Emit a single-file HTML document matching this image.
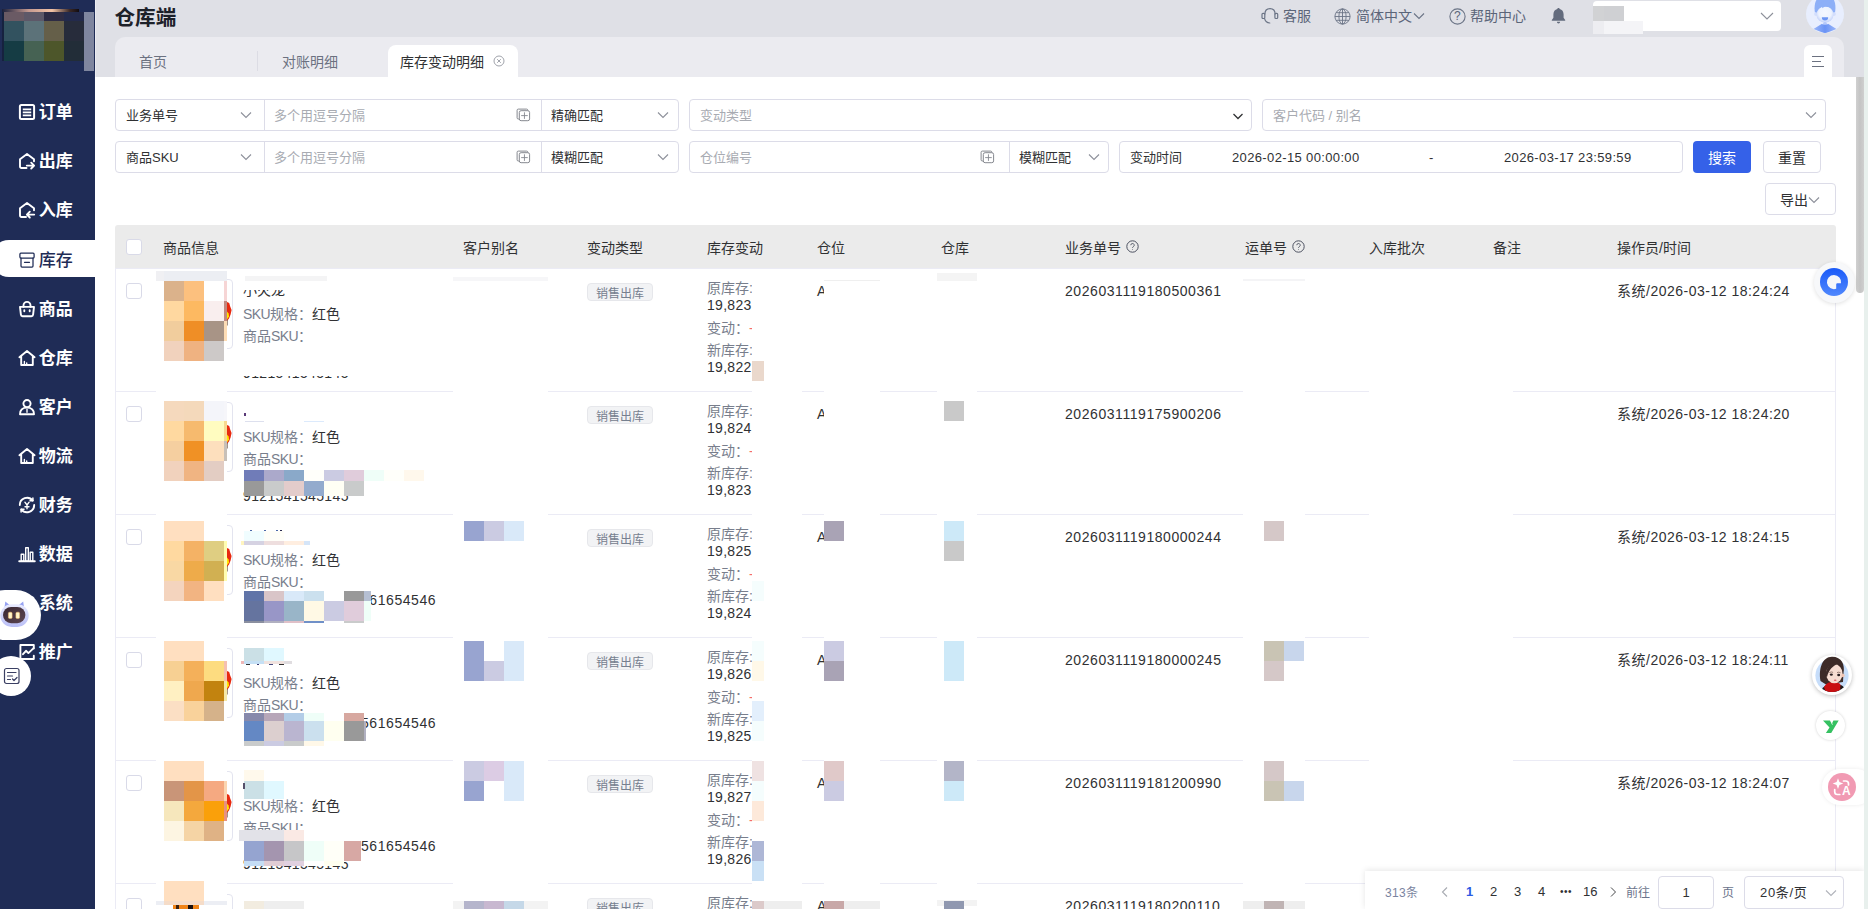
<!DOCTYPE html><html lang="zh-CN"><head><meta charset="utf-8"><title>仓库端 - 库存变动明细</title><style>
*{box-sizing:border-box;margin:0;padding:0}
html,body{width:1868px;height:909px;overflow:hidden;background:#fff}
body{position:relative;font-family:"Liberation Sans","Noto Sans CJK SC",sans-serif;font-size:14px;color:#303133}
.a{position:absolute}
.t{position:absolute;white-space:nowrap;line-height:20px}
#side{left:0;top:0;width:95px;height:909px;background:#1f2c56}
#hdr{left:95px;top:0;width:1769px;height:77px;background:#dfe0e6}
#rstrip{left:1864px;top:0;width:4px;height:909px;background:#e8f0ed}
#tabs{left:115px;top:37px;width:1729px;height:40px;background:#ebebf0;border-radius:10px 10px 0 0}
.mi{position:absolute;left:0;width:95px;height:36px;color:#fff;font-weight:700;font-size:17px}
.mi span{position:absolute;left:38.800px;top:2.200px;line-height:36px;white-space:nowrap}
.mi svg{position:absolute;left:16.600px;top:9px;width:20px;height:20px;fill:none;stroke:#fff;stroke-width:1.9;stroke-linecap:round;stroke-linejoin:round}
.mi.act{background:#fff;border-radius:18px 0 0 18px;color:#1f2c56;margin-top:-1px;height:37px;left:-9px;width:104px;font-weight:500}
.mi.act span{left:47.800px}
.mi.act svg{left:25.600px}
.mi.act span{top:3px}
.mi.act svg{top:10px;stroke-width:1.250}
.mi.act svg{stroke:#1f2c56}
.ht{color:#5b6579;font-size:14px}
.box{position:absolute;border:1px solid #dcdce8;border-radius:4px;background:#fff}
.ft{position:absolute;white-space:nowrap;font-size:13px;line-height:32px;color:#303133;top:0}
.ph{color:#a8abb2}
.dv{position:absolute;top:0;width:1px;height:30px;background:#dcdce8}
.arr{position:absolute;width:12px;height:12px;fill:none;stroke:#8d909a;stroke-width:1.1}
.th{position:absolute;top:238px;line-height:20px;font-size:14px;color:#303133;white-space:nowrap}
.cb{position:absolute;width:16px;height:16px;border:1px solid #d9dae8;border-radius:3px;background:#fff}
.tag{position:absolute;left:587px;width:66px;height:18px;border:1px solid #e6e7eb;border-radius:4px;background:#f2f3f5;color:#76808f;font-size:12px;line-height:21px;text-align:center;white-space:nowrap}
.lb{color:#787e8c}
.rl{position:absolute;height:1px;background:#ebebf5}
.m{position:absolute}
.num{letter-spacing:.56px}
.n2{letter-spacing:.3px;position:relative;top:-1px}
.sk{letter-spacing:-.6px}
</style></head><body>
<div class="a" id="hdr"></div>
<div class="a" id="tabs"></div>
<div class="a" id="rstrip"></div>
<div class="t" style="left:114.500px;top:6px;font-size:20.600px;font-weight:700;line-height:24px;color:#1d2129">仓库端</div>
<div class="t" style="left:139px;top:51.500px;color:#6b7180">首页</div>
<div class="a" style="left:257px;top:51px;width:1px;height:20px;background:#dcdce4"></div>
<div class="t" style="left:282px;top:51.500px;color:#6b7180">对账明细</div>
<div class="a" style="left:388px;top:45px;width:130px;height:32px;background:#fff;border-radius:8px 8px 0 0"></div>
<div class="t" style="left:400px;top:51.500px;color:#303133">库存变动明细</div>
<svg class="a" style="left:493px;top:55px" width="12" height="12" viewBox="0 0 12 12" fill="none" stroke="#a0a3ab" stroke-width="1"><circle cx="6" cy="6" r="5"/><path d="M4.2 4.2l3.6 3.6M7.8 4.2L4.2 7.8"/></svg>
<div class="a" style="left:1804px;top:45px;width:28px;height:32px;background:#fff;border-radius:6px 6px 0 0"></div>
<svg class="a" style="left:1811px;top:55px" width="14" height="13" viewBox="0 0 14 13" fill="none" stroke="#6b7180" stroke-width="1.2"><path d="M1 1.5h12M1 6.5h9M1 11.5h12"/></svg>
<svg class="a" style="left:1261px;top:7px" width="18" height="18" viewBox="0 0 18 18" fill="none" stroke="#6b7486" stroke-width="1.200" stroke-linecap="round"><rect x="1" y="6.300" width="2.800" height="5.200" rx="1"/><rect x="13.900" y="6.300" width="2.800" height="5.200" rx="1"/><path d="M3.900 7C3.900 3.500 6 1.600 9 1.600S14.100 3.500 14.100 7M3.600 11.600C4.200 14 6 15.800 8.800 16"/></svg>
<div class="t ht" style="left:1283px;top:6px">客服</div>
<svg class="a" style="left:1334px;top:8px" width="17" height="17" viewBox="0 0 17 17" fill="none" stroke="#6b7486" stroke-width="0.9"><circle cx="8.5" cy="8.5" r="7.6"/><ellipse cx="8.5" cy="8.5" rx="3.6" ry="7.6"/><path d="M8.5 .9v15.2M.9 8.5h15.2M2 4.7h13M2 12.3h13"/></svg>
<div class="t ht" style="left:1356px;top:6px">简体中文</div>
<svg class="a" style="left:1413px;top:11px" width="12" height="10" viewBox="0 0 12 10" fill="none" stroke="#6b7486" stroke-width="1.1"><path d="M1 2.5l5 5 5-5"/></svg>
<svg class="a" style="left:1449px;top:8px" width="17" height="17" viewBox="0 0 17 17" fill="none" stroke="#6b7486" stroke-width="1.1"><circle cx="8.5" cy="8.5" r="7.6"/></svg>
<div class="t ht" style="left:1454px;top:6px;font-size:12px">?</div>
<div class="t ht" style="left:1470px;top:6px">帮助中心</div>
<svg class="a" style="left:1550px;top:7px" width="17" height="18" viewBox="0 0 17 18"><path fill="#636b7d" d="M8.5 1c.7 0 1.2.5 1.2 1.1 2.4.6 3.9 2.600 3.900 5.200v3.500l1.600 2.200v.8H1.800v-.8l1.600-2.200V7.300c0-2.600 1.500-4.600 3.900-5.200C7.300 1.500 7.800 1 8.500 1zM6.900 14.800h3.200a1.600 1.600 0 0 1-3.200 0z"/></svg>
<div class="a" style="left:1593px;top:1px;width:188px;height:30px;background:#fff;border-radius:4px"></div>
<div class="a" style="left:1593px;top:6px;width:31px;height:15px;background:#cfd0d3"></div>
<div class="a" style="left:1593px;top:6px;width:11px;height:15px;background:#d1d2d4"></div>
<div class="a" style="left:1593px;top:21px;width:50px;height:13px;background:#f4f4f7"></div>
<div class="a" style="left:1593px;top:21px;width:11px;height:13px;background:#ededf1"></div>
<svg class="a" style="left:1760px;top:11px" width="14" height="10" viewBox="0 0 14 10" fill="none" stroke="#8d909a" stroke-width="1.1"><path d="M1 2l6 6 6-6"/></svg>
<svg class="a" style="left:1806px;top:-5px" width="38" height="38" viewBox="0 0 38 38"><defs><clipPath id="avc"><circle cx="19" cy="19" r="19"/></clipPath><radialGradient id="avf" cx=".5" cy=".4" r=".6"><stop offset="0" stop-color="#f4f7ff"/><stop offset=".6" stop-color="#eef3fe"/><stop offset="1" stop-color="#bfcffa"/></radialGradient><linearGradient id="avg" x1="0" y1="0" x2="1" y2="0"><stop offset="0" stop-color="#9bb6f9"/><stop offset=".5" stop-color="#6a93f5"/><stop offset="1" stop-color="#9bb6f9"/></linearGradient></defs><circle cx="19" cy="19" r="19" fill="#e8eefe"/><g clip-path="url(#avc)"><path d="M9.300 19C7 10 10 0 19-1c9 0 12 10 9.700 20z" fill="#8daff7"/><circle cx="10.100" cy="19" r="2" fill="#d3defc"/><circle cx="27.900" cy="19" r="2" fill="#d3defc"/><ellipse cx="19" cy="19.500" rx="8.600" ry="8.300" fill="url(#avf)"/><path d="M10.200 18.500C9.500 10 14 6.500 19 6.500c5.500 0 9.500 3.500 8.800 12-.5-4-2.500-6.800-7.800-6.800-1.600 0-3 .6-4 1.500l.3-1.500c-3 1-5.300 3-6.100 6.800z" fill="#8daff7"/><path d="M15.800 22.300h6.400a3.200 3.200 0 0 1-6.400 0z" fill="#6e96f3"/><rect x="17.100" y="27" width="3.800" height="4.500" rx="1.600" fill="#b5c8fa"/><path d="M7.500 34L16 28.700c1 1.500 5 1.500 6 0L30.500 34 19 38.500z" fill="url(#avg)"/></g></svg>
<div class="a" id="side"></div>
<div class="a" style="left:95px;top:0;width:1px;height:77px;background:#ececf1"></div>
<div class="m" style="left:2px;top:9px;width:77px;height:4px;background:linear-gradient(90deg,#1a1f3a 0%,#c59a90 35%,#f3c3a6 65%,#3a2826 88%,#120c10 100%)"></div>
<div class="m" style="left:2px;top:12px;width:3px;height:49px;background:#16223f"></div>
<div class="m" style="left:4px;top:12px;width:20px;height:9px;background:#6a5a64"></div>
<div class="m" style="left:24px;top:12px;width:20px;height:9px;background:#5d5868"></div>
<div class="m" style="left:44px;top:12px;width:20px;height:9px;background:#2e2c44"></div>
<div class="m" style="left:64px;top:12px;width:20px;height:9px;background:#232a4c"></div>
<div class="m" style="left:4px;top:21px;width:20px;height:20px;background:#32525f"></div>
<div class="m" style="left:24px;top:21px;width:20px;height:20px;background:#5c7279"></div>
<div class="m" style="left:44px;top:21px;width:20px;height:20px;background:#655f49"></div>
<div class="m" style="left:64px;top:21px;width:20px;height:20px;background:#272c3b"></div>
<div class="m" style="left:4px;top:41px;width:20px;height:20px;background:#153c44"></div>
<div class="m" style="left:24px;top:41px;width:20px;height:20px;background:#466253"></div>
<div class="m" style="left:44px;top:41px;width:20px;height:20px;background:#4d562a"></div>
<div class="m" style="left:64px;top:41px;width:20px;height:20px;background:#222d38"></div>
<div class="a" style="left:84px;top:12px;width:10px;height:59px;background:#7f869f"></div>
<div class="mi" style="top:93px"><svg viewBox="0 0 20 20"><rect x="2.900" y="3" width="14.200" height="14" rx="1.500" stroke-width="2"/><path d="M5.800 7.300h8.400M5.800 10.300h8.400M5.800 13.300h8.400" stroke-width="1.700" stroke-linecap="butt"/></svg><span>订单</span></div>
<div class="mi" style="top:142px"><svg viewBox="0 0 20 20"><path d="M9.500 17H4.400A1.400 1.400 0 0 1 3 15.600V8.200L10 2.900l7 5.300v2"/><path d="M9.800 14.600h7.200M14.200 11.700l2.900 2.900-2.900 2.900"/></svg><span>出库</span></div>
<div class="mi" style="top:191px"><svg viewBox="0 0 20 20"><path d="M9 17H4.400A1.400 1.400 0 0 1 3 15.600V8.200L10 2.900l7 5.300v2"/><path d="M17.200 14.600H10M12.800 11.700l-2.900 2.900 2.900 2.900"/></svg><span>入库</span></div>
<div class="mi act" style="top:241px"><svg viewBox="0 0 20 20"><rect x="2.900" y="3.200" width="14.200" height="4.800" rx="1"/><path d="M4 8v8a1 1 0 0 0 1 1h10a1 1 0 0 0 1-1V8M7.500 12.300h5"/></svg><span>库存</span></div>
<div class="mi" style="top:290px"><svg viewBox="0 0 20 20"><path d="M3 7.900h14l-.9 7.800a1.700 1.700 0 0 1-1.700 1.500H5.600a1.700 1.700 0 0 1-1.700-1.500z"/><path d="M6.500 7.900V6.400a3.500 3.500 0 0 1 7 0v1.500M7.300 11.300v1M12.700 11.300v1"/></svg><span>商品</span></div>
<div class="mi" style="top:339px"><svg viewBox="0 0 20 20"><path d="M2.400 9.200L10 2.900l7.600 6.300M4.200 8.200V17h11.600V8.200"/><path d="M7.400 16.500v-3M9.700 16.500V15" stroke-width="1.400"/></svg><span>仓库</span></div>
<div class="mi" style="top:388px"><svg viewBox="0 0 20 20"><circle cx="10" cy="6.600" r="3.600"/><path d="M3 17.200c0-4.500 3-6.600 7-6.600s7 2.100 7 6.600z"/><path d="M10 12.500v2.800" stroke-width="1.400"/></svg><span>客户</span></div>
<div class="mi" style="top:437px"><svg viewBox="0 0 20 20"><path d="M2.400 9.200L10 2.900l7.600 6.300M4.200 8.200V17h11.600V8.200"/><path d="M7.400 16.500v-3M9.700 16.500V15" stroke-width="1.400"/></svg><span>物流</span></div>
<div class="mi" style="top:486px"><svg viewBox="0 0 20 20"><path d="M17.200 10A7.200 7.200 0 0 1 4.300 14.400M2.800 10A7.200 7.200 0 0 1 15.700 5.600"/><path d="M15.900 2.900v2.900h-2.900M4.100 17.100v-2.900h2.900" stroke-width="1.500"/><path d="M7.900 7.200L10 10l2.100-2.800M10 10v3.800M8 11.700h4" stroke-width="1.400"/></svg><span>财务</span></div>
<div class="mi" style="top:535px"><svg viewBox="0 0 20 20"><path d="M2.200 17.300h15.600"/><rect x="4.200" y="10.300" width="2.600" height="7" stroke-width="1.400"/><rect x="8.700" y="3.800" width="2.600" height="13.500" stroke-width="1.400"/><rect x="13.200" y="8.300" width="2.600" height="9" stroke-width="1.400"/></svg><span>数据</span></div>
<div class="mi" style="top:584px"><svg viewBox="0 0 20 20"><circle cx="10" cy="10" r="2.800"/><path d="M10 2v2.300M10 15.700V18M2 10h2.300M15.700 10H18M4.300 4.300l1.700 1.700M14 14l1.700 1.700M4.300 15.700L6 14M14 6l1.700-1.700"/></svg><span>系统</span></div>
<div class="mi" style="top:633px"><svg viewBox="0 0 20 20"><path d="M16.800 6.500V3H3.400v14h13.400v-3.200"/><path d="M6 12.200l3-3.400 2.400 2.300 5.200-5"/></svg><span>推广</span></div>
<div class="a" style="left:-20px;top:590px;width:61px;height:50px;background:#fff;border-radius:25px"></div>
<svg class="a" style="left:0;top:600px" width="30" height="30" viewBox="0 0 30 30"><defs><linearGradient id="rb" x1="0" y1="0" x2="0" y2="1"><stop offset="0" stop-color="#e9ebfe"/><stop offset="1" stop-color="#b9bef6"/></linearGradient><linearGradient id="rf" x1="0" y1="0" x2="1" y2="1"><stop offset="0" stop-color="#3a2832"/><stop offset="1" stop-color="#5c4552"/></linearGradient></defs><path d="M4.300 9L5.300 1.600 10.500 5.800zM24.200 9L23.200 1.600 18 5.800z" fill="#96a2f2"/><rect x=".3" y="4.300" width="28.400" height="22.600" rx="11.300" fill="url(#rb)"/><rect x="3" y="7" width="22.400" height="16.200" rx="8.100" fill="url(#rf)"/><rect x="8.400" y="12.200" width="3.700" height="6.300" rx="1.200" fill="#fff4c8" stroke="#f2b86a" stroke-width=".5"/><rect x="15.900" y="12.200" width="3.700" height="6.300" rx="1.200" fill="#fff4c8" stroke="#f2b86a" stroke-width=".5"/></svg>
<div class="a" style="left:-9px;top:656px;width:40px;height:40px;background:#fff;border-radius:20px"></div>
<svg class="a" style="left:3px;top:667px" width="18" height="18" viewBox="0 0 18 18" fill="none" stroke="#3a3f63" stroke-width="1.200" stroke-linecap="round" stroke-linejoin="round"><rect x="1.500" y="1.500" width="14.500" height="15" rx="2"/><path d="M4.500 5.500h8.500M4.500 9h5M4.500 12.500h3M9.500 12l1.500 1.500 3-3"/></svg>
<div class="box" style="left:115px;top:99px;width:564px;height:32px">
<div class="dv" style="left:148px"></div><div class="dv" style="left:425px"></div>
<div class="ft" style="left:10px">业务单号</div>
<svg class="arr" style="left:124px;top:9px" viewBox="0 0 12 12"><path d="M1 3.500l5 5 5-5"/></svg>
<div class="ft ph" style="left:158px">多个用逗号分隔</div>
<svg class="a" style="left:400px;top:8px" width="15" height="14" viewBox="0 0 15 14" fill="none" stroke="#85888f" stroke-width="1"><path d="M3.200 11H2.300a1.200 1.200 0 0 1-1.200-1.200V2.300a1.200 1.200 0 0 1 1.200-1.200h8.300a1.200 1.200 0 0 1 1.200 1.200v.3"/><rect x="3.300" y="2.700" width="10.300" height="10" rx="1.800"/><path d="M8.450 4.300v6.600M5.150 7.600h6.600" stroke-width=".9"/></svg>
<div class="ft" style="left:435px">精确匹配</div>
<svg class="arr" style="left:541px;top:9px" viewBox="0 0 12 12"><path d="M1 3.500l5 5 5-5"/></svg>
</div>
<div class="box" style="left:115px;top:141px;width:564px;height:32px">
<div class="dv" style="left:148px"></div><div class="dv" style="left:425px"></div>
<div class="ft" style="left:10px">商品SKU</div>
<svg class="arr" style="left:124px;top:9px" viewBox="0 0 12 12"><path d="M1 3.500l5 5 5-5"/></svg>
<div class="ft ph" style="left:158px">多个用逗号分隔</div>
<svg class="a" style="left:400px;top:8px" width="15" height="14" viewBox="0 0 15 14" fill="none" stroke="#85888f" stroke-width="1"><path d="M3.200 11H2.300a1.200 1.200 0 0 1-1.200-1.200V2.300a1.200 1.200 0 0 1 1.200-1.200h8.300a1.200 1.200 0 0 1 1.200 1.200v.3"/><rect x="3.300" y="2.700" width="10.300" height="10" rx="1.800"/><path d="M8.450 4.300v6.600M5.150 7.600h6.600" stroke-width=".9"/></svg>
<div class="ft" style="left:435px">模糊匹配</div>
<svg class="arr" style="left:541px;top:9px" viewBox="0 0 12 12"><path d="M1 3.500l5 5 5-5"/></svg>
</div>
<div class="box" style="left:689px;top:99px;width:563px;height:32px"><div class="ft ph" style="left:10px">变动类型</div><svg class="arr" style="left:542px;top:10px;stroke:#303133;stroke-width:1.250" viewBox="0 0 12 12"><path d="M1.500 4l4.500 4.500L10.500 4"/></svg></div>
<div class="box" style="left:1262px;top:99px;width:564px;height:32px"><div class="ft ph" style="left:10px">客户代码 / 别名</div><svg class="arr" style="left:542px;top:9px" viewBox="0 0 12 12"><path d="M1 3.500l5 5 5-5"/></svg></div>
<div class="box" style="left:689px;top:141px;width:420px;height:32px"><div class="dv" style="left:319px"></div><div class="ft ph" style="left:10px">仓位编号</div><svg class="a" style="left:290px;top:8px" width="15" height="14" viewBox="0 0 15 14" fill="none" stroke="#85888f" stroke-width="1"><path d="M3.200 11H2.300a1.200 1.200 0 0 1-1.200-1.200V2.300a1.200 1.200 0 0 1 1.200-1.200h8.300a1.200 1.200 0 0 1 1.200 1.200v.3"/><rect x="3.300" y="2.700" width="10.300" height="10" rx="1.800"/><path d="M8.450 4.300v6.600M5.150 7.600h6.600" stroke-width=".9"/></svg><div class="ft" style="left:329px">模糊匹配</div><svg class="arr" style="left:398px;top:9px" viewBox="0 0 12 12"><path d="M1 3.500l5 5 5-5"/></svg></div>
<div class="box" style="left:1119px;top:141px;width:564px;height:32px"><div class="ft" style="left:10px">变动时间</div><div class="ft" style="left:112px;letter-spacing:.36px">2026-02-15 00:00:00</div><div class="ft" style="left:309px">-</div><div class="ft" style="left:384px;letter-spacing:.36px">2026-03-17 23:59:59</div></div>
<div class="a" style="left:1693px;top:141px;width:58px;height:32px;background:#3561e8;border-radius:4px;color:#fff;font-size:14px;line-height:34px;text-align:center">搜索</div>
<div class="box" style="left:1763px;top:141px;width:58px;height:32px;font-size:14px;line-height:32px;text-align:center;color:#303133">重置</div>
<div class="box" style="left:1765px;top:183px;width:71px;height:32px"><div class="ft" style="left:14px;font-size:14px;top:-.3px">导出</div><svg class="arr" style="left:42px;top:10px" viewBox="0 0 12 12"><path d="M1 3.500l5 5 5-5"/></svg></div>
<div class="a" style="left:115px;top:225px;width:1721px;height:43px;background:#ebebeb;border-radius:3px 3px 0 0"></div>
<div class="rl" style="left:115px;top:268px;width:1721px"></div>
<div class="a" style="left:115px;top:268px;width:1px;height:641px;background:#ebebf5"></div>
<div class="a" style="left:1835px;top:268px;width:1px;height:641px;background:#ebebf5"></div>
<div class="cb" style="left:126px;top:239px"></div>
<div class="th" style="left:163px">商品信息</div>
<div class="th" style="left:463px">客户别名</div>
<div class="th" style="left:587px">变动类型</div>
<div class="th" style="left:707px">库存变动</div>
<div class="th" style="left:817px">仓位</div>
<div class="th" style="left:941px">仓库</div>
<div class="th" style="left:1065px">业务单号</div>
<div class="th" style="left:1245px">运单号</div>
<div class="th" style="left:1369px">入库批次</div>
<div class="th" style="left:1493px">备注</div>
<div class="th" style="left:1617px">操作员/时间</div>
<svg class="a" style="left:1126px;top:240px" width="13" height="13" viewBox="0 0 13 13" fill="none" stroke="#4c5160" stroke-width="1"><circle cx="6.500" cy="6.500" r="5.700"/><path d="M4.800 5.200a1.700 1.700 0 1 1 2.500 1.500c-.5.300-.8.600-.8 1.200M6.500 9.300v.6" stroke-width=".9"/></svg>
<svg class="a" style="left:1292px;top:240px" width="13" height="13" viewBox="0 0 13 13" fill="none" stroke="#4c5160" stroke-width="1"><circle cx="6.500" cy="6.500" r="5.700"/><path d="M4.800 5.200a1.700 1.700 0 1 1 2.500 1.500c-.5.300-.8.600-.8 1.200M6.500 9.300v.6" stroke-width=".9"/></svg>
<div class="rl" style="left:115px;top:391px;width:1721px"></div>
<div class="cb" style="left:126px;top:283px"></div>
<div class="a" style="left:170px;top:279px;width:63px;height:70px;border:1px solid #e3e4ef;border-radius:4px"></div>
<svg class="a" style="left:227px;top:302px" width="5" height="24" viewBox="0 0 5 24"><path d="M0 0l2.200 1 1 3.500L4.600 8l-1 4.500L2 16.500 0 19z" fill="#e8290f"/><path d="M0 9.500l1.600 2 .4 3L0 17.500z" fill="#ffe600"/><path d="M.4 18v5.500" stroke="#6a5040" stroke-width=".7"/></svg>
<div class="t" style="left:243px;top:304px"><span class="lb"><span class="sk">SKU</span>规格：</span>红色</div>
<div class="t" style="left:243px;top:326px"><span class="lb">商品<span class="sk">SKU</span>：</span></div>
<div class="t" style="left:243px;top:280px;color:#303133">小火龙</div>
<div class="t" style="left:243px;letter-spacing:.35px;top:363px">9121541545145</div>
<div class="tag" style="top:283px">销售出库</div>
<div class="t" style="left:707px;top:279px;line-height:18px"><span class="lb">原库存:</span><br><span class="n2">19,823</span></div>
<div class="t" style="left:707px;top:319px;line-height:18px"><span class="lb">变动：</span><span style="color:#f56c6c">-</span></div>
<div class="t" style="left:707px;top:341px;line-height:18px"><span class="lb">新库存:</span><br><span class="n2">19,822</span></div>
<div class="t" style="left:817px;top:281px">A</div>
<div class="t num" style="left:1065px;top:281px">2026031119180500361</div>
<div class="t" style="left:1617px;top:281px;letter-spacing:.5px">系统/2026-03-12 18:24:24</div>
<div class="rl" style="left:115px;top:514px;width:1721px"></div>
<div class="cb" style="left:126px;top:406px"></div>
<div class="a" style="left:170px;top:402px;width:63px;height:70px;border:1px solid #e3e4ef;border-radius:4px"></div>
<svg class="a" style="left:227px;top:425px" width="5" height="24" viewBox="0 0 5 24"><path d="M0 0l2.200 1 1 3.500L4.600 8l-1 4.500L2 16.500 0 19z" fill="#e8290f"/><path d="M0 9.500l1.600 2 .4 3L0 17.500z" fill="#ffe600"/><path d="M.4 18v5.500" stroke="#6a5040" stroke-width=".7"/></svg>
<div class="t" style="left:243px;top:427px"><span class="lb"><span class="sk">SKU</span>规格：</span>红色</div>
<div class="t" style="left:243px;top:449px"><span class="lb">商品<span class="sk">SKU</span>：</span></div>
<div class="t" style="left:243px;letter-spacing:.35px;top:486px">9121541545145</div>
<div class="tag" style="top:406px">销售出库</div>
<div class="t" style="left:707px;top:402px;line-height:18px"><span class="lb">原库存:</span><br><span class="n2">19,824</span></div>
<div class="t" style="left:707px;top:442px;line-height:18px"><span class="lb">变动：</span><span style="color:#f56c6c">-</span></div>
<div class="t" style="left:707px;top:464px;line-height:18px"><span class="lb">新库存:</span><br><span class="n2">19,823</span></div>
<div class="t" style="left:817px;top:404px">A</div>
<div class="t num" style="left:1065px;top:404px">2026031119175900206</div>
<div class="t" style="left:1617px;top:404px;letter-spacing:.5px">系统/2026-03-12 18:24:20</div>
<div class="rl" style="left:115px;top:637px;width:1721px"></div>
<div class="cb" style="left:126px;top:529px"></div>
<div class="a" style="left:170px;top:525px;width:63px;height:70px;border:1px solid #e3e4ef;border-radius:4px"></div>
<svg class="a" style="left:227px;top:548px" width="5" height="24" viewBox="0 0 5 24"><path d="M0 0l2.200 1 1 3.500L4.600 8l-1 4.500L2 16.500 0 19z" fill="#e8290f"/><path d="M0 9.500l1.600 2 .4 3L0 17.500z" fill="#ffe600"/><path d="M.4 18v5.500" stroke="#6a5040" stroke-width=".7"/></svg>
<div class="t" style="left:243px;top:550px"><span class="lb"><span class="sk">SKU</span>规格：</span>红色</div>
<div class="t" style="left:243px;top:572px"><span class="lb">商品<span class="sk">SKU</span>：</span></div>
<div class="t num" style="left:361px;top:590px">561654546</div>
<div class="tag" style="top:529px">销售出库</div>
<div class="t" style="left:707px;top:525px;line-height:18px"><span class="lb">原库存:</span><br><span class="n2">19,825</span></div>
<div class="t" style="left:707px;top:565px;line-height:18px"><span class="lb">变动：</span><span style="color:#f56c6c">-</span></div>
<div class="t" style="left:707px;top:587px;line-height:18px"><span class="lb">新库存:</span><br><span class="n2">19,824</span></div>
<div class="t" style="left:817px;top:527px">A</div>
<div class="t num" style="left:1065px;top:527px">2026031119180000244</div>
<div class="t" style="left:1617px;top:527px;letter-spacing:.5px">系统/2026-03-12 18:24:15</div>
<div class="rl" style="left:115px;top:760px;width:1721px"></div>
<div class="cb" style="left:126px;top:652px"></div>
<div class="a" style="left:170px;top:648px;width:63px;height:70px;border:1px solid #e3e4ef;border-radius:4px"></div>
<svg class="a" style="left:227px;top:671px" width="5" height="24" viewBox="0 0 5 24"><path d="M0 0l2.200 1 1 3.500L4.600 8l-1 4.500L2 16.500 0 19z" fill="#e8290f"/><path d="M0 9.500l1.600 2 .4 3L0 17.500z" fill="#ffe600"/><path d="M.4 18v5.500" stroke="#6a5040" stroke-width=".7"/></svg>
<div class="t" style="left:243px;top:673px"><span class="lb"><span class="sk">SKU</span>规格：</span>红色</div>
<div class="t" style="left:243px;top:695px"><span class="lb">商品<span class="sk">SKU</span>：</span></div>
<div class="t num" style="left:361px;top:713px">561654546</div>
<div class="tag" style="top:652px">销售出库</div>
<div class="t" style="left:707px;top:648px;line-height:18px"><span class="lb">原库存:</span><br><span class="n2">19,826</span></div>
<div class="t" style="left:707px;top:688px;line-height:18px"><span class="lb">变动：</span><span style="color:#f56c6c">-</span></div>
<div class="t" style="left:707px;top:710px;line-height:18px"><span class="lb">新库存:</span><br><span class="n2">19,825</span></div>
<div class="t" style="left:817px;top:650px">A</div>
<div class="t num" style="left:1065px;top:650px">2026031119180000245</div>
<div class="t" style="left:1617px;top:650px;letter-spacing:.5px">系统/2026-03-12 18:24:11</div>
<div class="rl" style="left:115px;top:883px;width:1721px"></div>
<div class="cb" style="left:126px;top:775px"></div>
<div class="a" style="left:170px;top:771px;width:63px;height:70px;border:1px solid #e3e4ef;border-radius:4px"></div>
<svg class="a" style="left:227px;top:794px" width="5" height="24" viewBox="0 0 5 24"><path d="M0 0l2.200 1 1 3.500L4.600 8l-1 4.500L2 16.500 0 19z" fill="#e8290f"/><path d="M0 9.500l1.600 2 .4 3L0 17.500z" fill="#ffe600"/><path d="M.4 18v5.500" stroke="#6a5040" stroke-width=".7"/></svg>
<div class="t" style="left:243px;top:796px"><span class="lb"><span class="sk">SKU</span>规格：</span>红色</div>
<div class="t" style="left:243px;top:818px"><span class="lb">商品<span class="sk">SKU</span>：</span></div>
<div class="t num" style="left:361px;top:836px">561654546</div>
<div class="t" style="left:243px;letter-spacing:.35px;top:854px">9121541545145</div>
<div class="tag" style="top:775px">销售出库</div>
<div class="t" style="left:707px;top:771px;line-height:18px"><span class="lb">原库存:</span><br><span class="n2">19,827</span></div>
<div class="t" style="left:707px;top:811px;line-height:18px"><span class="lb">变动：</span><span style="color:#f56c6c">-</span></div>
<div class="t" style="left:707px;top:833px;line-height:18px"><span class="lb">新库存:</span><br><span class="n2">19,826</span></div>
<div class="t" style="left:817px;top:773px">A</div>
<div class="t num" style="left:1065px;top:773px">2026031119181200990</div>
<div class="t" style="left:1617px;top:773px;letter-spacing:.5px">系统/2026-03-12 18:24:07</div>
<div class="rl" style="left:115px;top:1006px;width:1721px"></div>
<div class="cb" style="left:126px;top:898px"></div>
<div class="a" style="left:170px;top:894px;width:63px;height:70px;border:1px solid #e3e4ef;border-radius:4px"></div>
<svg class="a" style="left:227px;top:917px" width="5" height="24" viewBox="0 0 5 24"><path d="M0 0l2.200 1 1 3.500L4.600 8l-1 4.500L2 16.500 0 19z" fill="#e8290f"/><path d="M0 9.500l1.600 2 .4 3L0 17.500z" fill="#ffe600"/><path d="M.4 18v5.500" stroke="#6a5040" stroke-width=".7"/></svg>
<div class="t" style="left:243px;top:919px"><span class="lb"><span class="sk">SKU</span>规格：</span>红色</div>
<div class="t" style="left:243px;top:941px"><span class="lb">商品<span class="sk">SKU</span>：</span></div>
<div class="tag" style="top:898px">销售出库</div>
<div class="t" style="left:707px;top:894px;line-height:18px"><span class="lb">原库存:</span><br><span class="n2">19,828</span></div>
<div class="t" style="left:707px;top:934px;line-height:18px"><span class="lb">变动：</span><span style="color:#f56c6c">-</span></div>
<div class="t" style="left:707px;top:956px;line-height:18px"><span class="lb">新库存:</span><br><span class="n2">19,827</span></div>
<div class="t" style="left:817px;top:896px">A</div>
<div class="t num" style="left:1065px;top:896px">2026031119180200110</div>
<div class="t" style="left:1617px;top:896px;letter-spacing:.5px">系统/2026-03-12 18:24:03</div>
<div class="m" style="left:156px;top:281px;width:71px;height:628px;background:#fff"></div>
<div class="m" style="left:453px;top:281px;width:95px;height:628px;background:#fff"></div>
<div class="m" style="left:752px;top:281px;width:50px;height:628px;background:#fff"></div>
<div class="m" style="left:824px;top:281px;width:56px;height:628px;background:#fff"></div>
<div class="m" style="left:937px;top:281px;width:40px;height:628px;background:#fff"></div>
<div class="m" style="left:1243px;top:281px;width:62px;height:628px;background:#fff"></div>
<div class="m" style="left:1369px;top:281px;width:144px;height:628px;background:#fff"></div>
<div class="m" style="left:164px;top:281px;width:20px;height:20px;background:#dbb28b"></div>
<div class="m" style="left:184px;top:281px;width:20px;height:20px;background:#fcc07e"></div>
<div class="m" style="left:204px;top:281px;width:20px;height:20px;background:#ffffff"></div>
<div class="m" style="left:164px;top:301px;width:20px;height:20px;background:#ffd8a0"></div>
<div class="m" style="left:184px;top:301px;width:20px;height:20px;background:#fdb961"></div>
<div class="m" style="left:204px;top:301px;width:20px;height:20px;background:#f9eeee"></div>
<div class="m" style="left:164px;top:321px;width:20px;height:20px;background:#f1cd9d"></div>
<div class="m" style="left:184px;top:321px;width:20px;height:20px;background:#ef8e26"></div>
<div class="m" style="left:204px;top:321px;width:20px;height:20px;background:#a89486"></div>
<div class="m" style="left:164px;top:341px;width:20px;height:20px;background:#f1d2bd"></div>
<div class="m" style="left:184px;top:341px;width:20px;height:20px;background:#efb281"></div>
<div class="m" style="left:204px;top:341px;width:20px;height:20px;background:#cdc9c8"></div>
<div class="m" style="left:224px;top:281px;width:3px;height:20px;background:#f6d5d5"></div>
<div class="m" style="left:224px;top:301px;width:3px;height:20px;background:#c08880"></div>
<div class="m" style="left:224px;top:321px;width:3px;height:20px;background:#fddcb5"></div>
<div class="m" style="left:243px;top:272px;width:120px;height:18px;background:#ffffff"></div>
<div class="m" style="left:243px;top:363px;width:120px;height:13px;background:#ffffff"></div>
<div class="m" style="left:752px;top:361px;width:12px;height:20px;background:#ead8cc"></div>
<div class="m" style="left:156px;top:271px;width:71px;height:10px;background:#eceef3"></div>
<div class="m" style="left:156px;top:271px;width:8px;height:10px;background:#f0f0f3"></div>
<div class="m" style="left:245px;top:276px;width:82px;height:5px;background:#f4f4f5"></div>
<div class="m" style="left:453px;top:277px;width:95px;height:4px;background:#f6f6f8"></div>
<div class="m" style="left:937px;top:273px;width:40px;height:8px;background:#f4f4f4"></div>
<div class="m" style="left:1243px;top:279px;width:62px;height:2px;background:#f4f4f6"></div>
<div class="m" style="left:824px;top:280px;width:56px;height:1px;background:#efefef"></div>
<div class="m" style="left:164px;top:401px;width:20px;height:20px;background:#f5d9bd"></div>
<div class="m" style="left:184px;top:401px;width:20px;height:20px;background:#f4d9bb"></div>
<div class="m" style="left:204px;top:401px;width:20px;height:20px;background:#f4f5fa"></div>
<div class="m" style="left:164px;top:421px;width:20px;height:20px;background:#ffd9a0"></div>
<div class="m" style="left:184px;top:421px;width:20px;height:20px;background:#f6ba6e"></div>
<div class="m" style="left:204px;top:421px;width:20px;height:20px;background:#fffcc0"></div>
<div class="m" style="left:164px;top:441px;width:20px;height:20px;background:#f5cfa0"></div>
<div class="m" style="left:184px;top:441px;width:20px;height:20px;background:#f09125"></div>
<div class="m" style="left:204px;top:441px;width:20px;height:20px;background:#fddfbd"></div>
<div class="m" style="left:164px;top:461px;width:20px;height:20px;background:#f1d2bd"></div>
<div class="m" style="left:184px;top:461px;width:20px;height:20px;background:#f0b482"></div>
<div class="m" style="left:204px;top:461px;width:20px;height:20px;background:#e3cdc3"></div>
<div class="m" style="left:224px;top:401px;width:3px;height:20px;background:#f6f6fa"></div>
<div class="m" style="left:224px;top:421px;width:3px;height:20px;background:#f8d890"></div>
<div class="m" style="left:224px;top:441px;width:3px;height:20px;background:#c8c0b8"></div>
<div class="m" style="left:243px;top:401px;width:120px;height:23px;background:#ffffff"></div>
<div class="m" style="left:244px;top:470px;width:20px;height:11px;background:#707cb8"></div>
<div class="m" style="left:264px;top:470px;width:20px;height:11px;background:#aba9cb"></div>
<div class="m" style="left:284px;top:470px;width:20px;height:11px;background:#8aa9c9"></div>
<div class="m" style="left:304px;top:470px;width:20px;height:11px;background:#fffffa"></div>
<div class="m" style="left:324px;top:470px;width:20px;height:11px;background:#cbcbe2"></div>
<div class="m" style="left:344px;top:470px;width:20px;height:11px;background:#e0ccdb"></div>
<div class="m" style="left:364px;top:470px;width:20px;height:11px;background:#effef8"></div>
<div class="m" style="left:384px;top:470px;width:20px;height:11px;background:#fffffa"></div>
<div class="m" style="left:404px;top:470px;width:20px;height:11px;background:#fff8ec"></div>
<div class="m" style="left:244px;top:481px;width:20px;height:15px;background:#999999"></div>
<div class="m" style="left:264px;top:481px;width:20px;height:15px;background:#c9cbcb"></div>
<div class="m" style="left:284px;top:481px;width:20px;height:15px;background:#e3cccb"></div>
<div class="m" style="left:304px;top:481px;width:20px;height:15px;background:#93abcd"></div>
<div class="m" style="left:324px;top:481px;width:20px;height:15px;background:#fffff4"></div>
<div class="m" style="left:344px;top:481px;width:20px;height:15px;background:#c9cbcb"></div>
<div class="m" style="left:944px;top:401px;width:20px;height:20px;background:#c9c9c9"></div>
<div class="m" style="left:164px;top:521px;width:20px;height:20px;background:#ffdfc0"></div>
<div class="m" style="left:184px;top:521px;width:20px;height:20px;background:#ffdfc0"></div>
<div class="m" style="left:204px;top:521px;width:20px;height:20px;background:#ffffff"></div>
<div class="m" style="left:164px;top:541px;width:20px;height:20px;background:#ffd9a0"></div>
<div class="m" style="left:184px;top:541px;width:20px;height:20px;background:#f4b265"></div>
<div class="m" style="left:204px;top:541px;width:20px;height:20px;background:#dfce82"></div>
<div class="m" style="left:164px;top:561px;width:20px;height:20px;background:#f9d8a4"></div>
<div class="m" style="left:184px;top:561px;width:20px;height:20px;background:#eeab4a"></div>
<div class="m" style="left:204px;top:561px;width:20px;height:20px;background:#d1b052"></div>
<div class="m" style="left:164px;top:581px;width:20px;height:20px;background:#f4d4be"></div>
<div class="m" style="left:184px;top:581px;width:20px;height:20px;background:#f2b482"></div>
<div class="m" style="left:204px;top:581px;width:20px;height:20px;background:#ffdfc0"></div>
<div class="m" style="left:224px;top:541px;width:3px;height:40px;background:#fffcb0"></div>
<div class="m" style="left:243px;top:521px;width:120px;height:10px;background:#ffffff"></div>
<div class="m" style="left:244px;top:531px;width:20px;height:10px;background:#f0fdff"></div>
<div class="m" style="left:264px;top:531px;width:20px;height:10px;background:#fffef8"></div>
<div class="m" style="left:284px;top:531px;width:80px;height:10px;background:#ffffff"></div>
<div class="m" style="left:241px;top:541px;width:3px;height:4px;background:#fff5c0"></div>
<div class="m" style="left:244px;top:541px;width:20px;height:4px;background:#d5d2e2"></div>
<div class="m" style="left:264px;top:541px;width:20px;height:4px;background:#eedede"></div>
<div class="m" style="left:284px;top:541px;width:20px;height:4px;background:#ffeee0"></div>
<div class="m" style="left:304px;top:541px;width:6px;height:4px;background:#d5e5f8"></div>
<div class="m" style="left:310px;top:541px;width:60px;height:4px;background:#ffffff"></div>
<div class="m" style="left:244px;top:591px;width:20px;height:10px;background:#6074a8"></div>
<div class="m" style="left:264px;top:591px;width:20px;height:10px;background:#d9c5c8"></div>
<div class="m" style="left:284px;top:591px;width:20px;height:10px;background:#d9e9f9"></div>
<div class="m" style="left:304px;top:591px;width:20px;height:10px;background:#cbe0ee"></div>
<div class="m" style="left:324px;top:591px;width:20px;height:10px;background:#ffffff"></div>
<div class="m" style="left:344px;top:591px;width:20px;height:10px;background:#999999"></div>
<div class="m" style="left:364px;top:591px;width:7px;height:10px;background:#b5bfd2"></div>
<div class="m" style="left:244px;top:601px;width:20px;height:20px;background:#65749f"></div>
<div class="m" style="left:264px;top:601px;width:20px;height:20px;background:#9896c7"></div>
<div class="m" style="left:284px;top:601px;width:20px;height:20px;background:#99b5c8"></div>
<div class="m" style="left:304px;top:601px;width:20px;height:20px;background:#fff9e5"></div>
<div class="m" style="left:324px;top:601px;width:20px;height:20px;background:#cbcbe2"></div>
<div class="m" style="left:344px;top:601px;width:20px;height:20px;background:#e0ccdb"></div>
<div class="m" style="left:364px;top:601px;width:7px;height:20px;background:#effef8"></div>
<div class="m" style="left:244px;top:621px;width:20px;height:2px;background:#8a8f9f"></div>
<div class="m" style="left:264px;top:621px;width:20px;height:2px;background:#b0b0c0"></div>
<div class="m" style="left:284px;top:621px;width:20px;height:2px;background:#e0c0c8"></div>
<div class="m" style="left:304px;top:621px;width:20px;height:2px;background:#7090c8"></div>
<div class="m" style="left:324px;top:621px;width:20px;height:2px;background:#ffffff"></div>
<div class="m" style="left:344px;top:621px;width:20px;height:2px;background:#c9cbcb"></div>
<div class="m" style="left:464px;top:521px;width:20px;height:20px;background:#98a4d0"></div>
<div class="m" style="left:484px;top:521px;width:20px;height:20px;background:#cbcbe2"></div>
<div class="m" style="left:504px;top:521px;width:20px;height:20px;background:#d9e9f9"></div>
<div class="m" style="left:824px;top:521px;width:20px;height:20px;background:#a9a3b5"></div>
<div class="m" style="left:944px;top:521px;width:20px;height:20px;background:#cde9f8"></div>
<div class="m" style="left:944px;top:541px;width:20px;height:20px;background:#c9c9c9"></div>
<div class="m" style="left:1264px;top:521px;width:20px;height:20px;background:#d5c8c8"></div>
<div class="m" style="left:752px;top:581px;width:12px;height:20px;background:#f5fdfd"></div>
<div class="m" style="left:164px;top:641px;width:20px;height:20px;background:#ffdfc0"></div>
<div class="m" style="left:184px;top:641px;width:20px;height:20px;background:#ffdfc0"></div>
<div class="m" style="left:204px;top:641px;width:20px;height:20px;background:#ffffff"></div>
<div class="m" style="left:164px;top:661px;width:20px;height:20px;background:#f7d093"></div>
<div class="m" style="left:184px;top:661px;width:20px;height:20px;background:#f4b05a"></div>
<div class="m" style="left:204px;top:661px;width:20px;height:20px;background:#fddc80"></div>
<div class="m" style="left:164px;top:681px;width:20px;height:20px;background:#fff0c2"></div>
<div class="m" style="left:184px;top:681px;width:20px;height:20px;background:#efa84e"></div>
<div class="m" style="left:204px;top:681px;width:20px;height:20px;background:#c2830f"></div>
<div class="m" style="left:164px;top:701px;width:20px;height:20px;background:#fbdfc4"></div>
<div class="m" style="left:184px;top:701px;width:20px;height:20px;background:#f9d29b"></div>
<div class="m" style="left:204px;top:701px;width:20px;height:20px;background:#d5b28a"></div>
<div class="m" style="left:224px;top:661px;width:3px;height:20px;background:#f5c0b0"></div>
<div class="m" style="left:224px;top:681px;width:3px;height:20px;background:#f5e8a8"></div>
<div class="m" style="left:243px;top:641px;width:120px;height:7px;background:#ffffff"></div>
<div class="m" style="left:244px;top:648px;width:20px;height:13px;background:#cbe0e6"></div>
<div class="m" style="left:264px;top:648px;width:20px;height:13px;background:#e0f8ff"></div>
<div class="m" style="left:284px;top:648px;width:80px;height:16px;background:#ffffff"></div>
<div class="m" style="left:241px;top:661px;width:3px;height:3px;background:#f0b8b8"></div>
<div class="m" style="left:244px;top:661px;width:20px;height:3px;background:#c5e0f5"></div>
<div class="m" style="left:264px;top:661px;width:20px;height:3px;background:#f0e2de"></div>
<div class="m" style="left:284px;top:661px;width:8px;height:3px;background:#e0dde0"></div>
<div class="m" style="left:244px;top:713px;width:20px;height:8px;background:#8789ab"></div>
<div class="m" style="left:264px;top:713px;width:20px;height:8px;background:#b7a7b9"></div>
<div class="m" style="left:284px;top:713px;width:20px;height:8px;background:#b3cde7"></div>
<div class="m" style="left:304px;top:713px;width:20px;height:8px;background:#effef8"></div>
<div class="m" style="left:324px;top:713px;width:20px;height:8px;background:#ffffff"></div>
<div class="m" style="left:344px;top:713px;width:20px;height:8px;background:#d7a8a0"></div>
<div class="m" style="left:244px;top:721px;width:20px;height:20px;background:#6488c4"></div>
<div class="m" style="left:264px;top:721px;width:20px;height:20px;background:#dccfcf"></div>
<div class="m" style="left:284px;top:721px;width:20px;height:20px;background:#bab5d0"></div>
<div class="m" style="left:304px;top:721px;width:20px;height:20px;background:#cbe0ee"></div>
<div class="m" style="left:324px;top:721px;width:20px;height:20px;background:#fffff0"></div>
<div class="m" style="left:344px;top:721px;width:20px;height:20px;background:#999999"></div>
<div class="m" style="left:364px;top:721px;width:2px;height:20px;background:#b0b0c0"></div>
<div class="m" style="left:244px;top:741px;width:20px;height:5px;background:#c9cbcb"></div>
<div class="m" style="left:264px;top:741px;width:20px;height:5px;background:#cbcbe2"></div>
<div class="m" style="left:284px;top:741px;width:20px;height:5px;background:#c9cbcb"></div>
<div class="m" style="left:304px;top:741px;width:20px;height:5px;background:#fff8e8"></div>
<div class="m" style="left:464px;top:641px;width:20px;height:40px;background:#98a4d0"></div>
<div class="m" style="left:484px;top:661px;width:20px;height:20px;background:#cbcbe2"></div>
<div class="m" style="left:504px;top:641px;width:20px;height:40px;background:#d9e9f9"></div>
<div class="m" style="left:824px;top:641px;width:20px;height:20px;background:#cbcbe2"></div>
<div class="m" style="left:824px;top:661px;width:20px;height:20px;background:#a9a3b5"></div>
<div class="m" style="left:944px;top:641px;width:20px;height:40px;background:#cde9f8"></div>
<div class="m" style="left:1264px;top:641px;width:20px;height:20px;background:#c9c4b4"></div>
<div class="m" style="left:1264px;top:661px;width:20px;height:20px;background:#d5c8c8"></div>
<div class="m" style="left:1284px;top:641px;width:20px;height:20px;background:#c8d6ec"></div>
<div class="m" style="left:752px;top:641px;width:12px;height:20px;background:#f5fdfd"></div>
<div class="m" style="left:752px;top:661px;width:12px;height:20px;background:#fff8e8"></div>
<div class="m" style="left:752px;top:701px;width:12px;height:20px;background:#e3effc"></div>
<div class="m" style="left:752px;top:721px;width:12px;height:20px;background:#f5fdfd"></div>
<div class="m" style="left:164px;top:761px;width:20px;height:20px;background:#ffdfc0"></div>
<div class="m" style="left:184px;top:761px;width:20px;height:20px;background:#ffdfc0"></div>
<div class="m" style="left:204px;top:761px;width:20px;height:20px;background:#ffffff"></div>
<div class="m" style="left:164px;top:781px;width:20px;height:20px;background:#c99578"></div>
<div class="m" style="left:184px;top:781px;width:20px;height:20px;background:#e39548"></div>
<div class="m" style="left:204px;top:781px;width:20px;height:20px;background:#f5a981"></div>
<div class="m" style="left:164px;top:801px;width:20px;height:20px;background:#f6e7bc"></div>
<div class="m" style="left:184px;top:801px;width:20px;height:20px;background:#f4a83d"></div>
<div class="m" style="left:204px;top:801px;width:20px;height:20px;background:#faa00a"></div>
<div class="m" style="left:164px;top:821px;width:20px;height:20px;background:#fdf5e2"></div>
<div class="m" style="left:184px;top:821px;width:20px;height:20px;background:#f5d4a5"></div>
<div class="m" style="left:204px;top:821px;width:20px;height:20px;background:#dfb285"></div>
<div class="m" style="left:224px;top:781px;width:3px;height:20px;background:#fbd5b0"></div>
<div class="m" style="left:224px;top:801px;width:3px;height:20px;background:#e89080"></div>
<div class="m" style="left:243px;top:761px;width:120px;height:9px;background:#ffffff"></div>
<div class="m" style="left:244px;top:770px;width:20px;height:11px;background:#fff9ec"></div>
<div class="m" style="left:264px;top:770px;width:100px;height:11px;background:#ffffff"></div>
<div class="m" style="left:244px;top:781px;width:20px;height:18px;background:#cbe0e6"></div>
<div class="m" style="left:264px;top:781px;width:20px;height:18px;background:#e0f8ff"></div>
<div class="m" style="left:284px;top:781px;width:80px;height:18px;background:#ffffff"></div>
<div class="m" style="left:239px;top:830px;width:45px;height:11px;background:#e2e2e8"></div>
<div class="m" style="left:284px;top:830px;width:20px;height:11px;background:#fae9e4"></div>
<div class="m" style="left:304px;top:830px;width:60px;height:11px;background:#ffffff"></div>
<div class="m" style="left:244px;top:841px;width:20px;height:20px;background:#95a4d0"></div>
<div class="m" style="left:264px;top:841px;width:20px;height:20px;background:#a495af"></div>
<div class="m" style="left:284px;top:841px;width:20px;height:20px;background:#c6c6c8"></div>
<div class="m" style="left:304px;top:841px;width:20px;height:20px;background:#effef8"></div>
<div class="m" style="left:324px;top:841px;width:20px;height:20px;background:#fffff8"></div>
<div class="m" style="left:344px;top:841px;width:17px;height:20px;background:#d7a8a4"></div>
<div class="m" style="left:244px;top:861px;width:20px;height:5px;background:#c5ddf5"></div>
<div class="m" style="left:264px;top:861px;width:20px;height:5px;background:#e0ccd5"></div>
<div class="m" style="left:284px;top:861px;width:20px;height:5px;background:#e0d0e0"></div>
<div class="m" style="left:304px;top:861px;width:20px;height:5px;background:#ffffff"></div>
<div class="m" style="left:324px;top:861px;width:20px;height:5px;background:#fffff0"></div>
<div class="m" style="left:464px;top:761px;width:20px;height:20px;background:#cbcbe2"></div>
<div class="m" style="left:464px;top:781px;width:20px;height:20px;background:#98a4d0"></div>
<div class="m" style="left:484px;top:761px;width:20px;height:20px;background:#dccce4"></div>
<div class="m" style="left:504px;top:761px;width:20px;height:40px;background:#d9e9f9"></div>
<div class="m" style="left:752px;top:761px;width:12px;height:20px;background:#efe2e2"></div>
<div class="m" style="left:752px;top:781px;width:12px;height:20px;background:#f5fdfd"></div>
<div class="m" style="left:752px;top:801px;width:12px;height:20px;background:#fde9da"></div>
<div class="m" style="left:752px;top:841px;width:12px;height:20px;background:#aeb7d6"></div>
<div class="m" style="left:752px;top:861px;width:12px;height:20px;background:#c9e0f5"></div>
<div class="m" style="left:824px;top:761px;width:20px;height:20px;background:#e0c9c9"></div>
<div class="m" style="left:824px;top:781px;width:20px;height:20px;background:#cbcbe2"></div>
<div class="m" style="left:944px;top:761px;width:20px;height:20px;background:#b3b5c8"></div>
<div class="m" style="left:944px;top:781px;width:20px;height:20px;background:#cde9f8"></div>
<div class="m" style="left:1264px;top:761px;width:20px;height:20px;background:#d5c8c8"></div>
<div class="m" style="left:1264px;top:781px;width:20px;height:20px;background:#c9c4b4"></div>
<div class="m" style="left:1284px;top:781px;width:20px;height:20px;background:#c8d6ec"></div>
<div class="m" style="left:173px;top:905px;width:26px;height:4px;background:#f08418"></div>
<div class="m" style="left:176px;top:905px;width:3px;height:4px;background:#3a2010"></div>
<div class="m" style="left:188px;top:905px;width:5px;height:4px;background:#181010"></div>
<div class="m" style="left:164px;top:881px;width:40px;height:20px;background:#ffdfc0"></div>
<div class="m" style="left:204px;top:881px;width:23px;height:20px;background:#ffffff"></div>
<div class="m" style="left:156px;top:901px;width:71px;height:4px;background:#eceef4"></div>
<div class="m" style="left:164px;top:901px;width:40px;height:4px;background:#f5dcc8"></div>
<div class="m" style="left:243px;top:890px;width:120px;height:11px;background:#ffffff"></div>
<div class="m" style="left:244px;top:901px;width:20px;height:8px;background:#f2ece0"></div>
<div class="m" style="left:264px;top:901px;width:40px;height:8px;background:#eeeeee"></div>
<div class="m" style="left:453px;top:901px;width:95px;height:8px;background:#f3f3f3"></div>
<div class="m" style="left:464px;top:901px;width:20px;height:8px;background:#b5b5cc"></div>
<div class="m" style="left:484px;top:901px;width:20px;height:8px;background:#c8b8d0"></div>
<div class="m" style="left:504px;top:901px;width:20px;height:8px;background:#c5d8e8"></div>
<div class="m" style="left:752px;top:901px;width:50px;height:8px;background:#eeeeee"></div>
<div class="m" style="left:752px;top:901px;width:12px;height:8px;background:#dccaca"></div>
<div class="m" style="left:824px;top:901px;width:56px;height:8px;background:#eeeeee"></div>
<div class="m" style="left:824px;top:901px;width:20px;height:8px;background:#c8a8a8"></div>
<div class="m" style="left:937px;top:900px;width:40px;height:6px;background:#f3f3f3"></div>
<div class="m" style="left:944px;top:901px;width:20px;height:8px;background:#9098b0"></div>
<div class="m" style="left:1243px;top:901px;width:62px;height:8px;background:#eeeeee"></div>
<div class="m" style="left:1264px;top:901px;width:20px;height:8px;background:#c0b4b4"></div>
<div class="m" style="left:244px;top:413px;width:2px;height:3px;background:#5a3a78"></div>
<div class="m" style="left:245px;top:421px;width:19px;height:1px;background:#dde0ee"></div>
<div class="m" style="left:304px;top:421px;width:20px;height:1px;background:#dceafc"></div>
<div class="m" style="left:250px;top:530px;width:2px;height:1px;background:#4a68a8"></div>
<div class="m" style="left:264px;top:530px;width:2px;height:1px;background:#4a68a8"></div>
<div class="m" style="left:276px;top:530px;width:2px;height:1px;background:#4a68a8"></div>
<div class="m" style="left:280px;top:530px;width:2px;height:1px;background:#2a2a50"></div>
<div class="m" style="left:246px;top:664px;width:4px;height:1px;background:#333333"></div>
<div class="m" style="left:257px;top:664px;width:2px;height:1px;background:#3a3a70"></div>
<div class="m" style="left:269px;top:664px;width:4px;height:1px;background:#444a80"></div>
<div class="m" style="left:279px;top:664px;width:5px;height:1px;background:#303030"></div>
<div class="m" style="left:243px;top:783px;width:2px;height:6px;background:#55506a"></div>
<div class="a" style="left:1365px;top:871px;width:499px;height:38px;background:#fff;box-shadow:0 -1px 6px rgba(0,0,0,.10)"></div>
<div class="t" style="left:1385px;top:883px;font-size:12px;color:#7a84a0;letter-spacing:.3px">313条</div>
<svg class="a" style="left:1440px;top:886px" width="10" height="12" viewBox="0 0 10 12" fill="none" stroke="#a8abb2" stroke-width="1.100"><path d="M7 1.500L2.500 6 7 10.500"/></svg>
<div class="t" style="left:1466px;top:882px;font-size:13px;font-weight:700;color:#2c5be4">1</div>
<div class="t" style="left:1490px;top:882px;font-size:13px;color:#303133">2</div>
<div class="t" style="left:1514px;top:882px;font-size:13px;color:#303133">3</div>
<div class="t" style="left:1538px;top:882px;font-size:13px;color:#303133">4</div>
<div class="t" style="left:1583px;top:882px;font-size:13px;color:#303133">16</div>
<div class="t" style="left:1560px;top:882px;font-size:10px;letter-spacing:.5px;color:#303133">•••</div>
<svg class="a" style="left:1608px;top:886px" width="10" height="12" viewBox="0 0 10 12" fill="none" stroke="#303133" stroke-width=".9"><path d="M3 1.500L7.500 6 3 10.500"/></svg>
<div class="t" style="left:1626px;top:883px;font-size:12px;color:#6b748c">前往</div>
<div class="box" style="left:1658px;top:876px;width:56px;height:33px;text-align:center;font-size:13px;line-height:31px;color:#303133">1</div>
<div class="t" style="left:1722px;top:883px;font-size:12px;color:#6b748c">页</div>
<div class="box" style="left:1744px;top:876px;width:100px;height:33px"><div class="ft" style="left:15px;letter-spacing:.7px">20条/页</div><svg class="arr" style="left:80px;top:10px;stroke:#b0b3ba" viewBox="0 0 12 12"><path d="M1 3.500l5 5 5-5"/></svg></div>
<div class="a" style="left:1856px;top:77px;width:8px;height:216px;border-radius:0 0 4px 4px;background:linear-gradient(90deg,#d0d0d0,#c4c4c4 50%,#cfcfcf)"></div>
<div class="a" style="left:1813.500px;top:261.500px;width:41px;height:41px;border-radius:21px;background:#f7f8fa;box-shadow:0 1px 4px rgba(0,0,0,.12)"></div>
<svg class="a" style="left:1820px;top:268px" width="28" height="28" viewBox="0 0 28 28"><defs><linearGradient id="bg1" x1="0" y1="0" x2="0" y2="1"><stop offset="0" stop-color="#1a5af8"/><stop offset="1" stop-color="#5088fd"/></linearGradient></defs><circle cx="14" cy="14" r="14" fill="url(#bg1)"/><path d="M14 6.900A7.100 7.100 0 1 0 16.200 20.750V16.400Q16.200 15.200 17.400 15.200H21A7.100 7.100 0 0 0 14 6.900z" fill="#f5f7fa"/></svg>
<div class="a" style="left:1812px;top:655px;width:40px;height:40px;border-radius:20px;background:#fff;box-shadow:0 1px 4px rgba(0,0,0,.25)"></div>
<svg class="a" style="left:1812px;top:655px" width="40" height="40" viewBox="0 0 40 40"><defs><clipPath id="gc"><circle cx="20" cy="20.500" r="16.600"/></clipPath></defs><circle cx="20" cy="20.500" r="16.600" fill="#c6ddfa"/><path d="M8.500 26C6.500 14 10 2 20 1.800c10 0 13 8.200 11.500 16.200L31 27l-17 2.500z" fill="#3d2b28"/><g clip-path="url(#gc)"><path d="M9.500 35c1.500-3.500 4.500-5 7-5h11c3 0 4.500 2 5 4l-4 4H13z" fill="#1f1a1a"/><path d="M12 32c2-4.500 6-5.500 9-4.500 3 .5 6-.5 7.500 2l-.5 7.500H13.500z" fill="#c90f12"/></g><ellipse cx="22.300" cy="18.700" rx="8.300" ry="9.600" fill="#f7ddd2"/><circle cx="31" cy="20.500" r="1.700" fill="#f0c4b4"/><path d="M13.500 21C14 12 18 7 27 6.500c3 1.500 4.600 5.500 4.300 9.500-1.300-4-3.300-6-5.800-7-4.500 2-8.500 5-10.500 13z" fill="#3d2b28"/><ellipse cx="19.300" cy="19.600" rx="1.500" ry="1.200" fill="#2a2022"/><ellipse cx="26.700" cy="20" rx="1.500" ry="1.200" fill="#2a2022"/><path d="M17.300 17.600q2-1.200 3.800-.2M25 17.600q1.800-1 3.600.2" stroke="#5a4038" stroke-width=".6" fill="none"/><ellipse cx="23.200" cy="25.300" rx="1.300" ry=".7" fill="#e0606a"/></svg>
<div class="a" style="left:1816px;top:711px;width:29px;height:29px;border-radius:15px;background:#fff;box-shadow:0 0 3px rgba(0,0,0,.18)"></div>
<svg class="a" style="left:1822px;top:720px" width="18" height="14" viewBox="0 0 18 14"><path d="M1 .500h7.200l1.700 3.300 1.500-3.300h5.300L9.200 12.900H3.900l3.600-5.400z" fill="#35c161"/><path d="M8.300 0l2.200 4.800" stroke="#fff" stroke-width=".7"/></svg>
<div class="a" style="left:1822px;top:769px;width:52px;height:36px;border-radius:18px;background:#fff;box-shadow:0 0 4px rgba(0,0,0,.08)"></div>
<svg class="a" style="left:1828px;top:773px" width="28" height="28" viewBox="0 0 28 28"><circle cx="14" cy="14" r="14" fill="#f19ab3"/><path d="M10 5.200l1.400 3.900 3.900 1.500-3.900 1.500L10 16l-1.400-3.900-3.900-1.500 3.900-1.500z" fill="#fff"/><path d="M15.500 8h2.300a2.700 2.700 0 0 1 2.700 2.700v1.300M6.700 16.500v2.300a2.700 2.700 0 0 0 2.700 2.700h2.400" fill="none" stroke="#fff" stroke-width="1.700" stroke-linecap="round"/><text x="14" y="21.800" font-size="12" font-weight="700" fill="#fff" font-family="Liberation Sans,sans-serif">A</text></svg>
<div class="m" style="left:1864px;top:0;width:4px;height:909px;background:#e8f0ed"></div>
</body></html>
